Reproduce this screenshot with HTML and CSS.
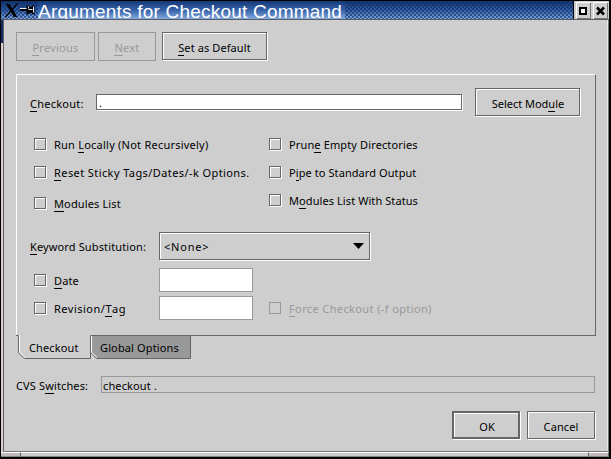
FILE: index.html
```html
<!DOCTYPE html>
<html lang="en">
<head>
<meta charset="utf-8">
<title>Arguments for Checkout Command</title>
<link rel="stylesheet" href="styles.css">
</head>
<body>
<div class="window">
  <header class="titlebar">
    <svg class="sysicon" width="32" height="17" viewBox="0 0 32 17">
      <path d="M2 2h3.500l8 13h-3.500z"/>
      <path d="M13.500 1.500L1.500 15" stroke="#000" stroke-width="1.3"/>
      <path d="M16 6.500h7" stroke="#e8f0ff" stroke-width="1"/>
      <path d="M16 7.500h7M16 8.500h7" stroke="#000" stroke-width="1"/>
      <path d="M22.500 3.500h2l1 1.500h2l1-1.500h2v9h-2l-1-1.500h-2l-1 1.500h-2z" fill="#000"/>
      <path d="M24.500 4.500v2M24.500 7.500h4M29.500 4.500v6" stroke="#e8f0ff"/>
    </svg>
    <h1>Arguments for Checkout Command</h1>
    <div class="controls">
      <svg width="15" height="17" viewBox="0 0 15 17"><path d="M.5 16.500V.5h14" fill="none" stroke="#fff"/><path d="M14.500 1v15.500H1" fill="none" stroke="#777"/><rect x="4" y="6" width="6" height="6" fill="#fff" stroke="#000" stroke-width="2"/></svg>
      <svg width="15" height="17" viewBox="0 0 15 17"><path d="M.5 16.500V.5h14" fill="none" stroke="#fff"/><path d="M14.500 1v15.500H1" fill="none" stroke="#777"/><path d="M4 5.500l7 7M11 5.500l-7 7" stroke="#000" stroke-width="2.500"/></svg>
    </div>
  </header>
  <main class="content">
    <div class="toolbar">
      <button class="btn previous" disabled><u>P</u>revious</button>
      <button class="btn next" disabled><u>N</u>ext</button>
      <button class="btn default"><u>S</u>et as Default</button>
    </div>
    <section class="panel">
      <div class="module-row">
        <span class="label"><u>C</u>heckout:</span>
        <div class="field">.</div>
        <button class="btn select">Select Mod<u>u</u>le</button>
      </div>
      <div class="options">
        <div class="column">
          <label class="check"><i class="box"></i><span class="t-run">Run <u>L</u>ocally (Not Recursively)</span></label>
          <label class="check"><i class="box"></i><span class="t-reset"><u>R</u>eset Sticky Tags/Dates/-k Options.</span></label>
          <label class="check low"><i class="box"></i><span><u>M</u>odules List</span></label>
        </div>
        <div class="column">
          <label class="check"><i class="box"></i><span>Prun<u>e</u> Empty Directories</span></label>
          <label class="check"><i class="box"></i><span class="t-pipe">P<u>i</u>pe to Standard Output</span></label>
          <label class="check"><i class="box"></i><span class="t-pipe">M<u>o</u>dules List With Status</span></label>
        </div>
      </div>
      <div class="keyword-row">
        <span class="label"><u>K</u>eyword Substitution:</span>
        <div class="combo"><span>&lt;None&gt;</span><svg width="11" height="6" viewBox="0 0 11 6"><path d="M0 0h11L5.500 6z"/></svg></div>
      </div>
      <div class="entry-row">
        <label class="check"><i class="box"></i><span><u>D</u>ate</span></label>
        <div class="entry"></div>
      </div>
      <div class="entry-row">
        <label class="check"><i class="box"></i><span class="t-rev">Revision/<u>T</u>ag</span></label>
        <div class="entry"></div>
        <label class="check off"><i class="box"></i><span class="t-force"><u>F</u>orce Checkout (-f option)</span></label>
      </div>
    </section>
    <nav class="tabs">
      <svg class="tabshape" width="580" height="26" viewBox="0 0 580 26">
        <path d="M75 1h100v22H81l-6-6z" fill="#999"/>
        <path d="M0 .5h2.500V18l6 5.500h66V.5M74.500 17l6 6.500h94V.5M74.500 .5H580" fill="none" stroke="#666"/>
        <path d="M3.500 0v17l5.500 5.500M75.500 1v16l5.500 5.500" fill="none" stroke="#fff"/>
      </svg>
      <span class="tab first">Checkout</span>
      <span class="tab second">Global Options</span>
    </nav>
    <div class="switches">
      <span class="label">CVS S<u>w</u>itches:</span>
      <div class="output">checkout .</div>
    </div>
    <div class="actions">
      <button class="btn ok">OK</button>
      <button class="btn cancel">Cancel</button>
    </div>
  </main>
  <footer class="grip"><i></i><i></i><i></i></footer>
</div>
</body>
</html>
```
FILE: styles.css
```css
* { box-sizing: border-box; }
body { margin: 0; width: 611px; height: 459px; overflow: hidden; background: #000; font: 11px/14px "Noto Sans", sans-serif; letter-spacing: .13px; color: #000; }
.window { width: 611px; height: 459px; border: 1px solid #000; border-right-width: 2px; border-bottom-width: 2px; background: linear-gradient(#102a68 42px, #d8d0d0 42px); }
.titlebar { display: flex; align-items: flex-start; height: 19px; padding-left: 3px; overflow: hidden; background: radial-gradient(circle, #123068 .6px, transparent .9px) 0 0 / 4px 4px, radial-gradient(circle, #123068 .6px, transparent .9px) 2px 2px / 4px 4px, linear-gradient(#12306c, #305ca4 50%, #7ca4dc); border-bottom: 1px solid #555c68; }
.sysicon { flex: none; margin-top: 1px; }
h1 { flex: none; margin: 0 0 0 2px; width: 307px; height: 19px; overflow: hidden; font: 19px/21px "Liberation Sans", sans-serif; letter-spacing: .21px; color: #fff; white-space: nowrap; background: linear-gradient(#153878, #3864aa 50%, #8eb2e2); }
.controls { display: flex; margin-left: auto; padding: 1px 1px 0 2px; height: 19px; width: 36px; justify-content: space-between; background: #cecece; border-left: 1px solid #000; }
.content { height: 432px; margin-left: 2px; padding: 12px 13px 0 12px; border: 1px solid #777; border-left-color: #665e5e; border-top: 0; background: #cecece; box-shadow: inset -1px 0 #e8e8e8; }
.toolbar { display: flex; gap: 3px; height: 29px; }
u { text-decoration: none; box-shadow: 0 1px #000; display: inline-block; height: 14px; line-height: 14px; }
.btn { display: block; flex: none; height: 28px; padding: 4px 0 0; border: 1px solid #666; border-radius: 0; background: #cecece; box-shadow: inset 1px 1px #fff, 1px 1px #fff; color: #000; font: inherit; letter-spacing: .1px; white-space: nowrap; text-align: center; }
.btn:disabled { height: 29px; padding-top: 3px; color: #999; border-color: #999; box-shadow: none; letter-spacing: .25px; }
.btn:disabled u { box-shadow: 0 1px #999; }
.previous { width: 79px; }
.next { width: 58px; }
.default { width: 105px; margin-left: 3px; }
.panel { height: 261px; margin-top: 13px; padding: 13px 12px 0 13px; border-left: 1px solid #fff; border-top: 1px solid #fff; border-right: 1px solid #666; width: 580px; }
.module-row { display: flex; height: 30px; }
.label { white-space: nowrap; flex: none; }
.module-row .label { width: 66px; padding-top: 9px; letter-spacing: .25px; }
.field { width: 366px; height: 16px; margin: 6px 13px 0 0; padding: 1px 2px; border: 1px solid #666; background: #fff; box-shadow: 1px 1px #fff; }
.select { width: 105px; padding-left: 1px; letter-spacing: -.03px; }
.options { display: flex; padding: 20px 0 0 4px; height: 114px; }
.column { width: 235px; }
.check { display: flex; height: 28px; align-items: flex-start; white-space: nowrap; }
.check.low { margin-top: 3px; }
.box { flex: none; width: 12px; height: 12px; margin: 0 8px 0 0; border: 1px solid #666; box-shadow: inset 1px 1px #fff, 1px 1px #fff; }
.check span { display: block; }
.t-run { letter-spacing: .23px; }
.t-reset { letter-spacing: .41px; }
.t-pipe { letter-spacing: .08px; }
.t-rev { letter-spacing: .5px; }
.t-force { letter-spacing: .38px; }
.keyword-row { display: flex; height: 28px; }
.keyword-row .label { width: 129px; padding-top: 8px; }
.combo { display: flex; align-items: center; justify-content: space-between; width: 211px; height: 28px; padding: 0 5px 0 4px; border: 1px solid #666; box-shadow: inset 1px 1px #fff, 1px 1px #fff; }
.combo span { letter-spacing: .8px; padding-top: 2px; }
.entry-row { display: flex; height: 28px; padding: 8px 0 0 4px; }
.entry-row .check { width: 125px; padding-top: 6px; }
.entry { flex: none; width: 94px; height: 24px; border: 1px solid #999; background: #fff; margin-right: 16px; }
.entry-row .off { color: #999; width: 180px; }
.off .box { border-color: #999; box-shadow: none; }
.off u { box-shadow: 0 1px #999; }
.tabs { position: relative; display: flex; height: 26px; padding: 6px 0 0 13px; }
.tabshape { position: absolute; left: 0; top: 0; }
.tab { position: relative; white-space: nowrap; }
.tab.first { width: 71px; }
.switches { display: flex; margin-top: 15px; height: 18px; }
.switches .label { width: 85px; padding-top: 3px; }
.output { width: 495px; height: 17px; padding: 2px 1px; border: 1px solid #999; }
.actions { display: flex; justify-content: flex-end; gap: 7px; margin-top: 17px; width: 579px; }
.ok, .cancel { width: 68px; }
.ok { border-width: 2px; padding-left: 2px; }
.grip { display: grid; grid-template-columns: 20px 1fr 20px; height: 5px; }
.grip i { border-top: 1px solid #fff; border-right: 1px solid #666; border-bottom: 1px solid #888; background: #c0bab8; }
.grip i:nth-child(2) { background: #cecaca; }
```
